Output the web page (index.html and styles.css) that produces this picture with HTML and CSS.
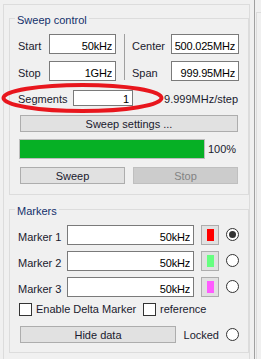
FILE: index.html
```html
<!DOCTYPE html>
<html lang="en">
  <head>
    <meta charset="UTF-8" />
    <meta name="viewport" content="width=device-width, initial-scale=1.0" />
    <title>Sweep control</title>
    <link rel="stylesheet" href="styles.css">
  </head>
  <body>
    <div class="frame">
      <fieldset class="group sweep">
        <legend>Sweep control</legend>

        <div class="range">
          <label>Start</label>
          <input class="field" type="text" value="50kHz" readonly />
          <span class="divider"></span>
          <label>Center</label>
          <input class="field" type="text" value="500.025MHz" readonly />
          <label>Stop</label>
          <input class="field" type="text" value="1GHz" readonly />
          <label>Span</label>
          <input class="field" type="text" value="999.95MHz" readonly />
        </div>

        <div class="segments">
          <label>Segments</label>
          <input class="field small" type="text" value="1" readonly />
          <span class="step">9.999MHz/step</span>
        </div>

        <button class="btn wide">Sweep settings ...</button>

        <div class="progress-row">
          <div class="progress"><div class="bar" style="width: 100%"></div></div>
          <span class="percent">100%</span>
        </div>

        <div class="actions">
          <button class="btn">Sweep</button>
          <button class="btn" disabled>Stop</button>
        </div>
      </fieldset>

      <fieldset class="group markers">
        <legend>Markers</legend>

        <div class="marker">
          <label>Marker 1</label>
          <input class="field long" type="text" value="50kHz" readonly />
          <button class="btn swatch"><span class="chip red"></span></button>
          <span class="radio checked"></span>
        </div>
        <div class="marker">
          <label>Marker 2</label>
          <input class="field long" type="text" value="50kHz" readonly />
          <button class="btn swatch"><span class="chip green"></span></button>
          <span class="radio"></span>
        </div>
        <div class="marker">
          <label>Marker 3</label>
          <input class="field long" type="text" value="50kHz" readonly />
          <button class="btn swatch"><span class="chip pink"></span></button>
          <span class="radio"></span>
        </div>

        <div class="checks">
          <label class="check first"><span class="box"></span>Enable Delta Marker</label>
          <label class="check"><span class="box"></span>reference</label>
        </div>

        <div class="bottom">
          <button class="btn hide">Hide data</button>
          <span class="locked">Locked</span>
          <span class="radio"></span>
        </div>
      </fieldset>
    </div>

    <span class="splitter"></span>
    <div class="side"></div>

    <!-- red ring drawn over the segments row -->
    <svg class="ring" width="170" height="36" viewBox="0 0 170 36">
      <ellipse cx="82.5" cy="16" rx="79" ry="13" fill="none" stroke="#e8161d" stroke-width="4" />
    </svg>
  </body>
</html>
```

FILE: styles.css
```css
body {
  margin: 0;
  width: 261px;
  height: 359px;
  overflow: hidden;
  position: relative;
  display: flex;
  background-color: #f0f0f0;
  font-family: "Liberation Sans", Arial, sans-serif;
  font-size: 11px;
  color: #1a1a2e;
}

.frame {
  box-sizing: border-box;
  width: 247px;
  height: 355px;
  margin: 4px 0 0 3px;
  border: 1px solid #dcdcdc;
  border-bottom: none;
}

.group {
  box-sizing: border-box;
  width: 240px;
  margin: 0 0 0 5px;
  padding: 7px 9px 10px 8px;
  border: 1px solid #dcdcdc;
}

.sweep {
  margin-top: 4px;
}

.markers {
  margin-top: 5px;
  padding-bottom: 9px;
}

.group legend {
  margin-left: -3px;
  padding: 4px 2px 0;
  line-height: 14px;
  color: #13306b;
}

label {
  padding-top: 2px;
  line-height: 20px;
}

.field {
  box-sizing: border-box;
  height: 20px;
  margin: 0;
  padding: 3px 3px 0 2px;
  border: 1px solid #7a7a7a;
  background-color: #fff;
  font: inherit;
  letter-spacing: -0.2px;
  color: #000;
  text-align: right;
  outline: none;
}

.range {
  display: grid;
  grid-template-columns: 31px 67px 16px 39px 68px;
  grid-template-rows: 20px 20px;
  row-gap: 7px;
  align-items: start;
}

.range .field {
  width: 100%;
}

.divider {
  grid-column: 3;
  grid-row: 1 / 3;
  width: 1px;
  height: 46px;
  margin-left: 8px;
  background-color: #a0a0a0;
}

.segments {
  display: flex;
  align-items: flex-start;
  height: 16px;
  margin-top: 9px;
}

.segments label {
  width: 55px;
  padding-top: 0;
  line-height: 18px;
}

.field.small {
  width: 60px;
  height: 16px;
  padding-top: 1px;
}

.step {
  margin-left: auto;
  margin-right: 1px;
  line-height: 18px;
}

.btn {
  box-sizing: border-box;
  height: 17px;
  padding: 0;
  border: 1px solid #adadad;
  background-color: #e1e1e1;
  font: inherit;
  color: #1a1a2e;
}

.btn:disabled {
  border-color: #bfbfbf;
  background-color: #cccccc;
  color: #838383;
}

.wide {
  display: block;
  width: 218px;
  margin: 9px 0 0 2px;
}

.progress-row {
  display: flex;
  align-items: center;
  margin-top: 7px;
}

.progress {
  box-sizing: border-box;
  width: 186px;
  height: 20px;
  margin-left: 1px;
  border: 1px solid #bcbcbc;
  background-color: #e6e6e6;
}

.bar {
  height: 100%;
  background-color: #06b025;
}

.percent {
  margin-left: 3px;
}

.actions {
  display: flex;
  gap: 8px;
  margin: 8px 0 0 2px;
}

.actions .btn {
  width: 105px;
}

.marker {
  display: flex;
  align-items: flex-start;
  height: 20px;
  margin-bottom: 6px;
}

.marker label {
  width: 49px;
}

.field.long {
  width: 127px;
}

.swatch {
  width: 18px;
  height: 20px;
  margin-left: 7px;
  display: flex;
  align-items: center;
  justify-content: center;
}

.chip {
  width: 7px;
  height: 12px;
}

.red {
  background-color: #ff0000;
}

.green {
  background-color: #66ff80;
}

.pink {
  background-color: #ff5cff;
}

.radio {
  box-sizing: border-box;
  width: 13px;
  height: 13px;
  margin: 3px 0 0 7px;
  border: 1px solid #333;
  border-radius: 50%;
  background-color: #fff;
  display: flex;
  align-items: center;
  justify-content: center;
}

.radio.checked::after {
  content: "";
  width: 7px;
  height: 7px;
  border-radius: 50%;
  background-color: #333;
}

.checks {
  display: flex;
  margin-top: 2px;
}

.check {
  display: flex;
  align-items: center;
  gap: 4px;
  height: 13px;
  padding: 0;
  line-height: 13px;
}

.check.first {
  width: 124px;
  margin-left: 1px;
}

.box {
  box-sizing: border-box;
  width: 13px;
  height: 13px;
  border: 1px solid #333;
  background-color: #fff;
}

.bottom {
  display: flex;
  align-items: center;
  margin-top: 10px;
}

.hide {
  width: 156px;
  margin-left: 2px;
}

.locked {
  margin-left: auto;
}

.bottom .radio {
  margin-top: 0;
}

.splitter {
  width: 1px;
  height: 100%;
  margin-left: 4px;
  background-color: #a0a0a0;
}

.side {
  flex: 1;
  margin: 12px 0 0 1px;
  border-top: 1px solid #dcdcdc;
  border-left: 1px solid #dcdcdc;
}

.ring {
  position: absolute;
  left: 0;
  top: 82px;
}
```
